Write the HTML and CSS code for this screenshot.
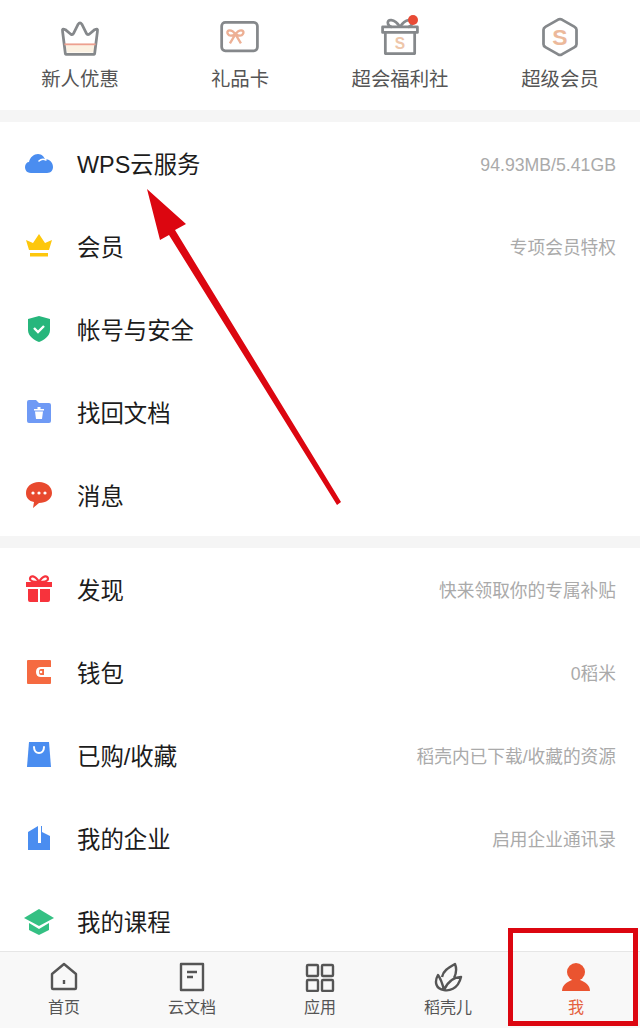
FILE: index.html
```html
<!DOCTYPE html>
<html lang="zh-CN">

<head>
    <meta charset="UTF-8">
    <meta name="viewport" content="width=device-width, initial-scale=1.0">
    <title>我</title>
    <link rel="stylesheet" href="styles.css">
</head>

<body>
    <div class="page">
        <div class="content">
            <!-- Entradas superiores -->
            <ul class="shortcuts">
                <li class="shortcut">
                    <svg class="shortcut-icon" viewBox="0 0 48 48">
                        <path class="tint-soft" d="M8 33 H40 L39 41 H10 Z" />
                        <path class="line" d="M8 42 L5 18 Q4 14 8 16 L14 21 Q16 22 17 20 L22 10 Q24 7 26 10 L31 20 Q32 22 34 21 L40 16 Q44 14 43 18 L40 42 Q40 43 38 43 L10 43 Q8 43 8 42 Z" />
                        <path class="tint-bar" d="M7 32 H41" />
                    </svg>
                    <span>新人优惠</span>
                </li>
                <li class="shortcut">
                    <svg class="shortcut-icon" viewBox="0 0 48 48">
                        <rect class="line" x="4" y="8" width="39" height="31" rx="4" />
                        <path class="tint-line" d="M19 21 C14 14 8 17 11 21 C12 23 15 23 19 21 C23 23 26 23 27 21 C30 17 24 14 19 21 Z M19 21 L13 31 M19 21 L25 31" />
                    </svg>
                    <span>礼品卡</span>
                </li>
                <li class="shortcut">
                    <svg class="shortcut-icon" viewBox="0 0 48 48">
                        <path class="line" d="M8 19 V42 H40 V19 M5 13 H43 V19 H5 Z" />
                        <path class="line" d="M24 13 C18 3 9 4 11 10 C12 12 14 13 15 13 M24 13 C30 3 39 4 37 10 C36 12 34 13 33 13" />
                        <text class="tint-text" x="24" y="37" text-anchor="middle">S</text>
                    </svg>
                    <i class="dot"></i>
                    <span>超会福利社</span>
                </li>
                <li class="shortcut">
                    <svg class="shortcut-icon" viewBox="0 0 48 48">
                        <path class="line" d="M22 5 Q24 4 26 5 L40 13 Q42 14 42 16 V32 Q42 34 40 35 L26 43 Q24 44 22 43 L8 35 Q6 34 6 32 V16 Q6 14 8 13 Z" />
                        <text class="tint-text big" x="24" y="33" text-anchor="middle">S</text>
                    </svg>
                    <span>超级会员</span>
                </li>
            </ul>

            <ul class="group">
                <li class="row">
                    <svg class="row-icon" viewBox="0 0 30 30">
                        <path fill="#4a8df0" d="M7 25 C2 25 1 21 1 19 C1 16 3 14 5 14 C6 9 10 6 14 6 C18 6 20 9 21 11 C26 11 29 15 29 19 C29 22 27 25 23 25 Z" />
                        <path fill="none" stroke="#fff" stroke-width="1.6" stroke-linecap="round" d="M15 13 C17 11 20 11 22 12" />
                    </svg>
                    <span class="row-label">WPS云服务</span>
                    <span class="row-note">94.93MB/5.41GB</span>
                </li>
                <li class="row">
                    <svg class="row-icon" viewBox="0 0 30 30">
                        <path fill="#fdc70c" d="M5 19 L2 9 L9 12 L15 3 L21 12 L28 9 L25 19 Z" />
                        <rect fill="#fdc70c" x="6" y="22" width="18" height="3.5" />
                    </svg>
                    <span class="row-label">会员</span>
                    <span class="row-note">专项会员特权</span>
                </li>
                <li class="row">
                    <svg class="row-icon" viewBox="0 0 30 30">
                        <path fill="#27b67c" d="M15 2 L26 5 V16 C26 22 20 26 15 28 C10 26 4 22 4 16 V5 Z" />
                        <path fill="none" stroke="#fff" stroke-width="2.4" d="M10 14 L14 18 L20 12" />
                    </svg>
                    <span class="row-label">帐号与安全</span>
                </li>
                <li class="row">
                    <svg class="row-icon" viewBox="0 0 30 30">
                        <path fill="#6f9af5" d="M3 5 Q3 3 5 3 H12 L15 6 H25 Q27 6 27 8 V24 Q27 26 25 26 H5 Q3 26 3 24 Z" />
                        <path fill="#fff" d="M10 12 H20 V13.5 H10 Z M13.5 10 H16.5 V12 H13.5 Z M11 14.5 H19 L18 22 H12 Z" />
                    </svg>
                    <span class="row-label">找回文档</span>
                </li>
                <li class="row">
                    <svg class="row-icon" viewBox="0 0 30 30">
                        <path fill="#e8492e" d="M15 2 C23 2 28 7 28 13 C28 19 22 23 15 23 L9 28 L10 22 C5 21 2 18 2 13 C2 7 7 2 15 2 Z" />
                        <circle fill="#fff" cx="9" cy="13" r="1.6" />
                        <circle fill="#fff" cx="15" cy="13" r="1.6" />
                        <circle fill="#fff" cx="21" cy="13" r="1.6" />
                    </svg>
                    <span class="row-label">消息</span>
                </li>
            </ul>

            <ul class="group">
                <li class="row">
                    <svg class="row-icon" viewBox="0 0 30 30">
                        <path fill="none" stroke="#f7333c" stroke-width="2.2" d="M15 8 C11 1 6 1 6 5 C6 7 9 8 15 8 C21 8 24 7 24 5 C24 1 19 1 15 8 Z" />
                        <path fill="#f7333c" d="M2 8 H28 V13 H2 Z M4 15 H14 V28 H6 Q4 28 4 26 Z M16 15 H26 V26 Q26 28 24 28 H16 Z" />
                    </svg>
                    <span class="row-label">发现</span>
                    <span class="row-note">快来领取你的专属补贴</span>
                </li>
                <li class="row">
                    <svg class="row-icon" viewBox="0 0 30 30">
                        <path fill="#f56a41" d="M4 3 H26 Q27 3 27 4 V10 H17 Q12 10 12 15 Q12 20 17 20 H27 V26 Q27 27 26 27 H4 Q3 27 3 26 V4 Q3 3 4 3 Z" />
                        <path fill="#f56a41" d="M17 12 H20 V18 H17 Q15 18 15 15 Q15 12 17 12 Z" />
                        <circle fill="#fff" cx="17" cy="15" r="1.3" />
                    </svg>
                    <span class="row-label">钱包</span>
                    <span class="row-note">0稻米</span>
                </li>
                <li class="row">
                    <svg class="row-icon" viewBox="0 0 30 30">
                        <path fill="#4a8df0" d="M5 2 H25 L27 27 H3 Z" />
                        <path fill="none" stroke="#fff" stroke-width="2" stroke-linecap="round" d="M10 7 C10 15 20 15 20 7" />
                    </svg>
                    <span class="row-label">已购/收藏</span>
                    <span class="row-note">稻壳内已下载/收藏的资源</span>
                </li>
                <li class="row">
                    <svg class="row-icon" viewBox="0 0 30 30">
                        <path fill="#4a8df0" d="M4 9 L14 3 V20 H17 V3 H18 V9 L26 13 V27 H4 Z" />
                    </svg>
                    <span class="row-label">我的企业</span>
                    <span class="row-note">启用企业通讯录</span>
                </li>
                <li class="row">
                    <svg class="row-icon" viewBox="0 0 30 30">
                        <path fill="#34c083" d="M15 3 L30 12 L15 20 L0 12 Z" />
                        <path fill="#34c083" d="M5 17 L15 23 L25 17 V24 L15 29 L5 24 Z" />
                    </svg>
                    <span class="row-label">我的课程</span>
                </li>
            </ul>
        </div>

        <ul class="tabbar">
            <li class="tab">
                <svg class="tab-icon" viewBox="0 0 30 30">
                    <path class="tab-line" d="M3 26 V12 L15 2 L27 12 V26 Q27 27 26 27 H4 Q3 27 3 26 Z M15 18 V22" />
                </svg>
                <span>首页</span>
            </li>
            <li class="tab">
                <svg class="tab-icon" viewBox="0 0 30 30">
                    <path class="tab-line" d="M4 2 H26 V28 H4 Z M10 10 H20 M10 15 H16" />
                </svg>
                <span>云文档</span>
            </li>
            <li class="tab">
                <svg class="tab-icon" viewBox="0 0 30 30">
                    <rect class="tab-line" x="2" y="3" width="11" height="11" rx="1" />
                    <rect class="tab-line" x="17" y="3" width="11" height="11" rx="1" />
                    <rect class="tab-line" x="2" y="18" width="11" height="11" rx="1" />
                    <rect class="tab-line" x="17" y="18" width="11" height="11" rx="1" />
                </svg>
                <span>应用</span>
            </li>
            <li class="tab">
                <svg class="tab-icon" viewBox="0 0 30 30">
                    <path class="tab-line" d="M11 28 C3 27 1 20 5 13 C8 17 9 20 11 28 C15 29 25 28 28 15 C24 15 16 17 11 28 Z M9 15 C10 9 15 6 22 2 C24 7 23 12 21 16" />
                </svg>
                <span>稻壳儿</span>
            </li>
            <li class="tab tab-active">
                <svg class="tab-icon" viewBox="0 0 30 30">
                    <circle fill="#ea5430" cx="15" cy="10" r="9" />
                    <path fill="#ea5430" d="M1 29 C1 23 6 20 11 18 H19 C24 20 29 23 29 29 Z" />
                </svg>
                <span>我</span>
            </li>
        </ul>

        <!-- Anotaciones rojas sobre la captura -->
        <svg class="arrow" viewBox="0 0 640 1028">
            <path fill="#dc0610" d="M147 189 L186 224 L175 230 L341 502 L337 505 L169 235 L160 240 Z" />
        </svg>
        <div class="mark"></div>
    </div>
</body>

</html>
```

FILE: styles.css
```css
* {
    box-sizing: border-box;
}

body {
    margin: 0;
    padding: 0;
    font-family: "Liberation Sans", "Noto Sans CJK SC", sans-serif;
    background-color: #fff;
}

ul {
    list-style-type: none;
    margin: 0;
    padding: 0;
}

.page {
    position: relative;
    display: flex;
    flex-direction: column;
    width: 640px;
    height: 1028px;
    overflow: hidden;
    background-color: #f5f5f5;
}

.content {
    flex: 1;
    min-height: 0;
    overflow: hidden;
}

/* Entradas superiores */
.shortcuts {
    display: grid;
    grid-template-columns: repeat(4, 160px);
    height: 110px;
    padding-top: 15px;
    background-color: #fff;
}

.shortcut {
    position: relative;
    display: flex;
    flex-direction: column;
    align-items: center;
    font-size: 19.4px;
    line-height: 28px;
    color: #555;
}

.shortcut-icon {
    width: 44px;
    height: 44px;
    margin-bottom: 6px;
}

.line {
    fill: none;
    stroke: #85888b;
    stroke-width: 3;
    stroke-linejoin: round;
}

.tint-bar {
    fill: none;
    stroke: #eda08f;
    stroke-width: 2;
}

.tint-soft {
    fill: #fbf1e2;
}

.tint-line {
    fill: none;
    stroke: #edb095;
    stroke-width: 2.6;
}

.tint-text {
    fill: #eec6a9;
    font-size: 17px;
    font-weight: 700;
}

.tint-text.big {
    fill: #ecb99b;
    font-size: 25px;
}

.dot {
    position: absolute;
    top: 0;
    left: 88px;
    width: 10px;
    height: 10px;
    border-radius: 50%;
    background-color: #e84a35;
}

/* Listas */
.group {
    margin-top: 12px;
    background-color: #fff;
}

.row {
    display: flex;
    align-items: center;
    height: 82.8px;
    padding: 0 24px;
}

.row-icon {
    width: 30px;
    height: 30px;
    margin-right: 23px;
    flex-shrink: 0;
}

.row-label {
    flex: 1;
    padding-top: 4px;
    font-size: 23.4px;
    line-height: 32px;
    color: #1c1c1c;
}

.row-note {
    padding-top: 4px;
    font-size: 17.7px;
    line-height: 24px;
    color: #aaa;
}

/* Barra inferior */
.tabbar {
    display: grid;
    grid-template-columns: repeat(5, 128px);
    height: 77px;
    padding-top: 10px;
    background-color: #f8f8f8;
    border-top: 1px solid #e6e6e6;
}

.tab {
    display: flex;
    flex-direction: column;
    align-items: center;
    font-size: 16px;
    line-height: 22px;
    color: #555;
}

.tab-icon {
    width: 30px;
    height: 30px;
    margin-bottom: 5px;
}

.tab-line {
    fill: none;
    stroke: #555;
    stroke-width: 2.4;
    stroke-linejoin: round;
}

.tab-active {
    color: #e5603f;
}

/* Anotaciones */
.arrow {
    position: absolute;
    top: 0;
    left: 0;
    width: 640px;
    height: 1028px;
    pointer-events: none;
}

.mark {
    position: absolute;
    left: 508px;
    top: 928px;
    width: 130px;
    height: 98px;
    border: 5px solid #dc0610;
}
```
